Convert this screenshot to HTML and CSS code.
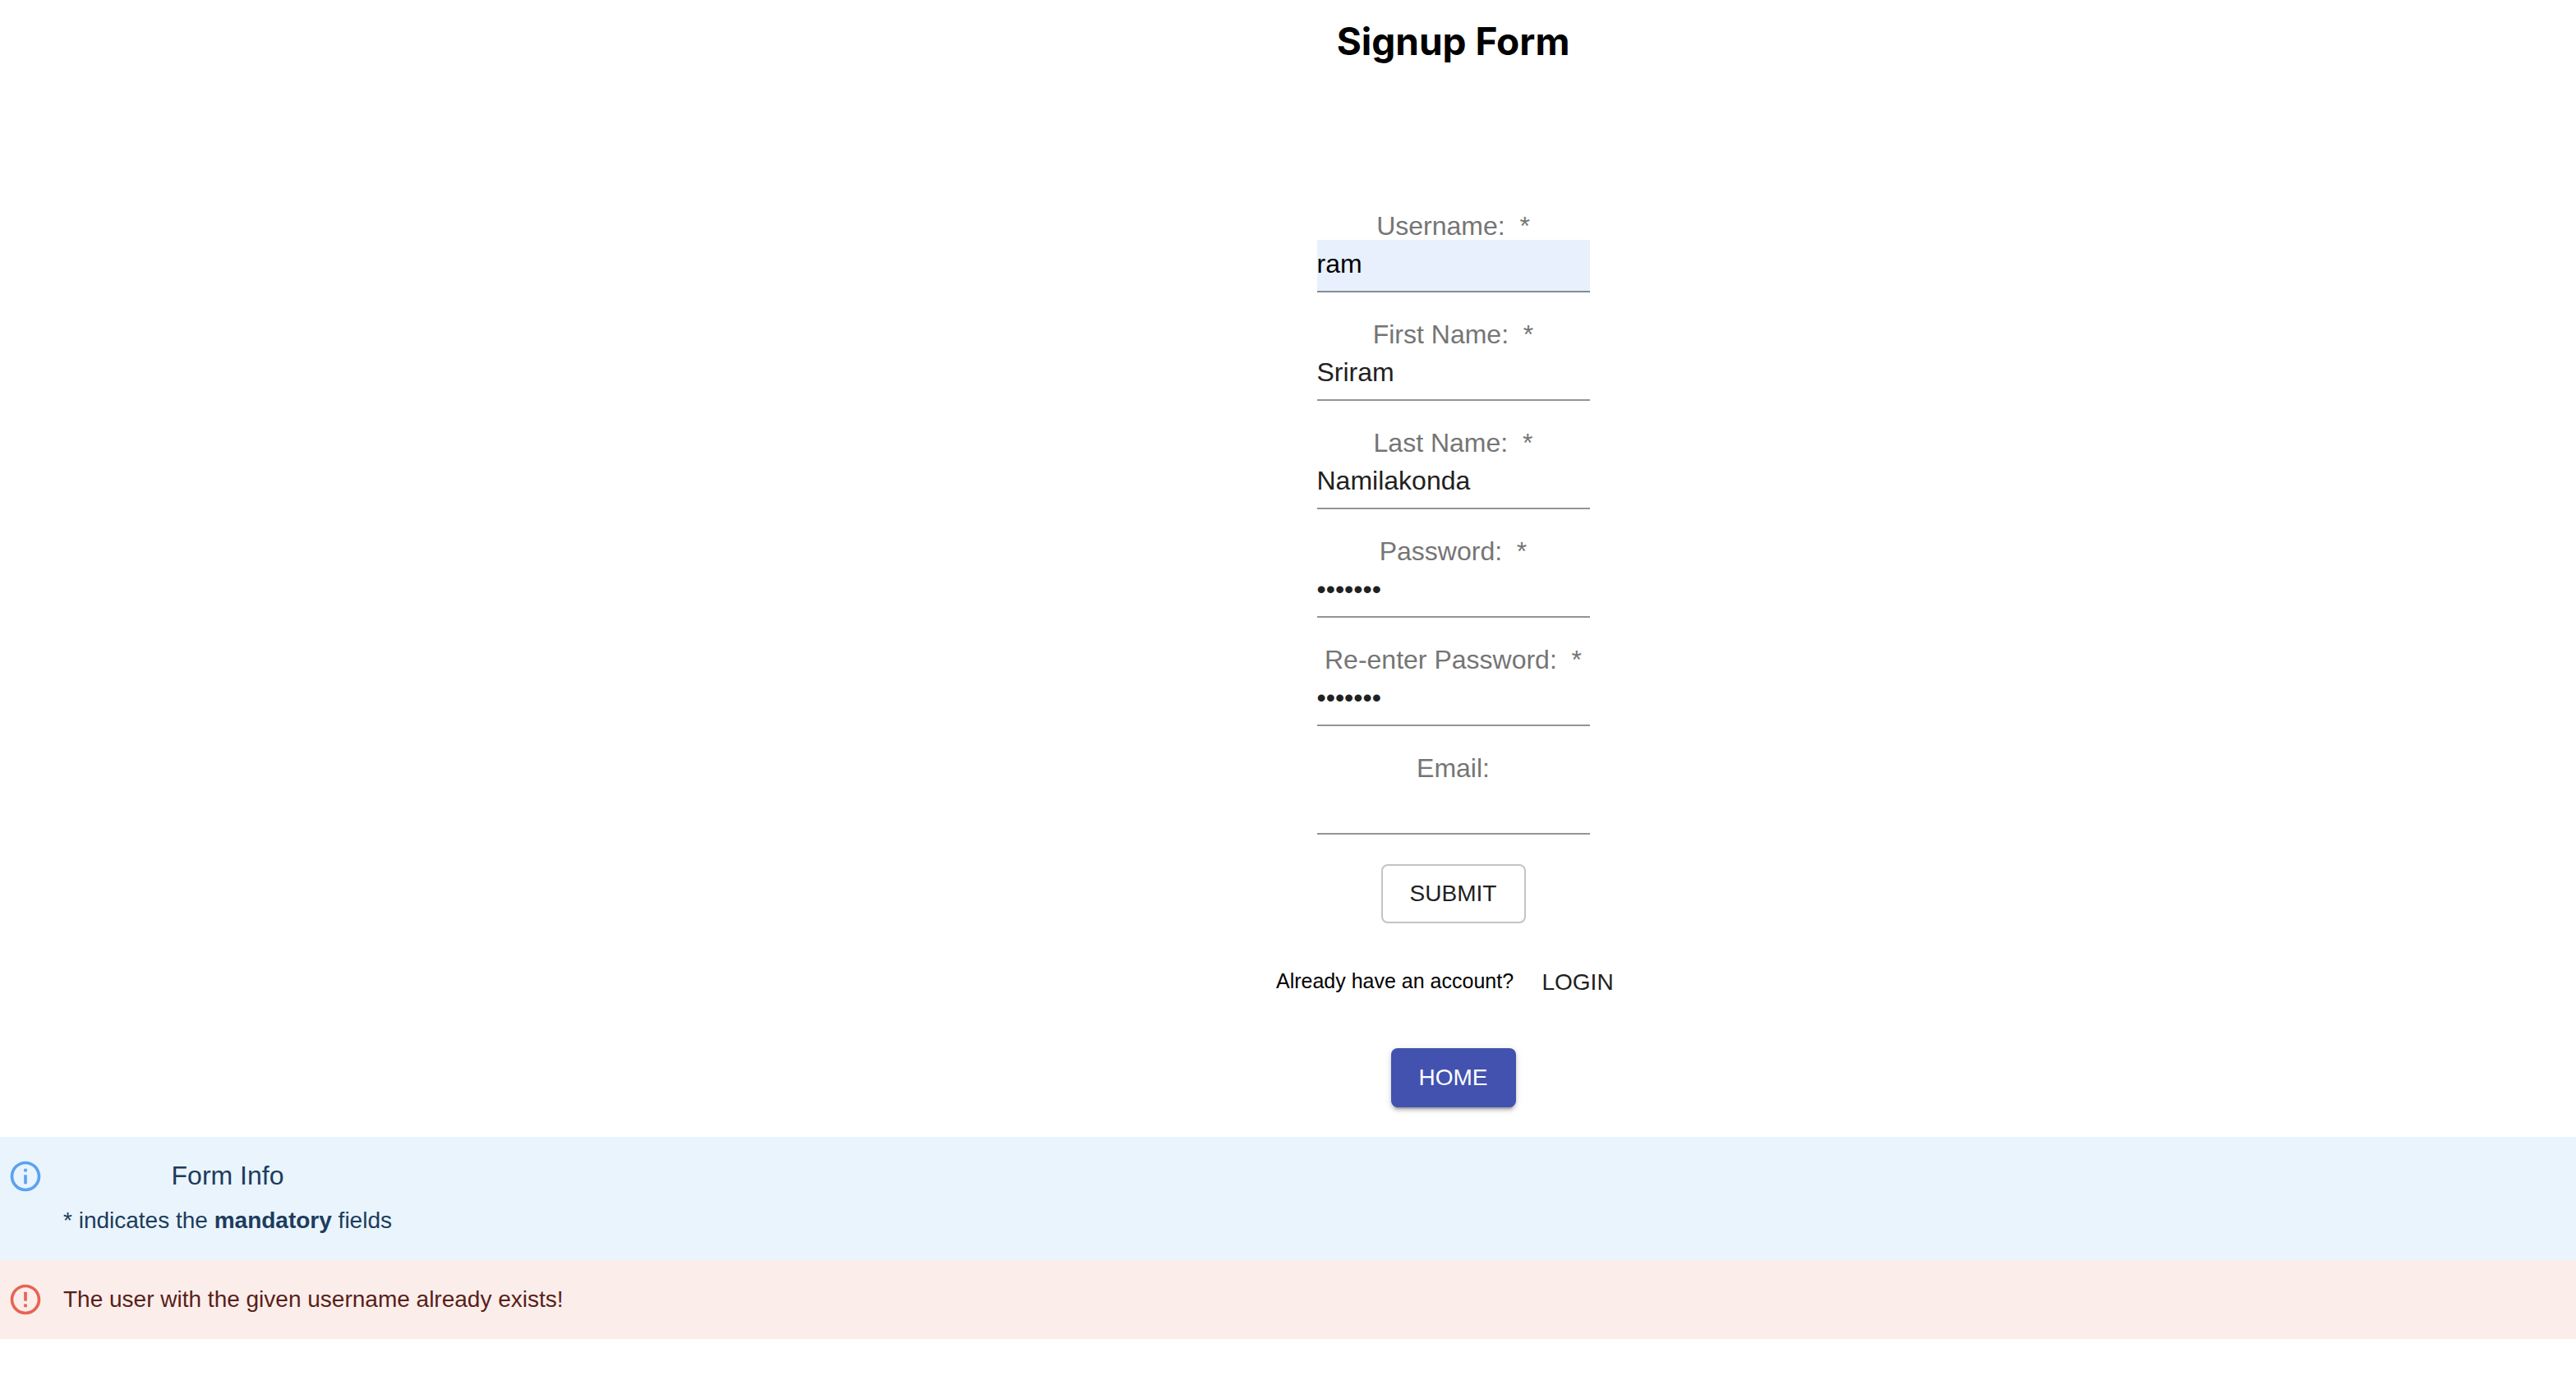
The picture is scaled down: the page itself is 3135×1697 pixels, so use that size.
FILE: index.html
```html
<!DOCTYPE html>
<html lang="en">
<head>
<meta charset="utf-8">
<meta name="viewport" content="width=device-width, initial-scale=1">
<title>Signup Form</title>
<link rel="stylesheet" href="styles.css">
</head>
<body>
<main class="signup">
  <h1 class="title">Signup Form</h1>
  <form class="form">
    <div class="field">
      <label class="label" for="username">Username: &nbsp;*</label>
      <input class="input input-autofilled" id="username" type="text" value="ram">
    </div>
    <div class="field">
      <label class="label" for="first-name">First Name: &nbsp;*</label>
      <input class="input" id="first-name" type="text" value="Sriram">
    </div>
    <div class="field">
      <label class="label" for="last-name">Last Name: &nbsp;*</label>
      <input class="input" id="last-name" type="text" value="Namilakonda">
    </div>
    <div class="field">
      <label class="label" for="password">Password: &nbsp;*</label>
      <input class="input" id="password" type="password" value="sriram1">
    </div>
    <div class="field">
      <label class="label" for="password-again">Re-enter Password: &nbsp;*</label>
      <input class="input" id="password-again" type="password" value="sriram1">
    </div>
    <div class="field">
      <label class="label" for="email">Email:</label>
      <input class="input" id="email" type="email">
    </div>
    <button class="button button-outlined" type="submit">SUBMIT</button>
  </form>
  <div class="login">
    <span class="caption">Already have an account?</span>
    <button class="button button-text" type="button">LOGIN</button>
  </div>
  <button class="button button-primary" type="button">HOME</button>
</main>
<section class="alert alert-info">
  <svg class="alert-icon" viewBox="0 0 24 24" aria-hidden="true"><path d="M11 7h2v2h-2zm0 4h2v6h-2zm1-9C6.48 2 2 6.48 2 12s4.48 10 10 10 10-4.48 10-10S17.52 2 12 2zm0 18c-4.41 0-8-3.59-8-8s3.59-8 8-8 8 3.59 8 8-3.59 8-8 8z"/></svg>
  <div class="alert-message">
    <h2 class="alert-title">Form Info</h2>
    <p class="alert-text">* indicates the <strong>mandatory</strong> fields</p>
  </div>
</section>
<section class="alert alert-error" role="alert">
  <svg class="alert-icon" viewBox="0 0 24 24" aria-hidden="true"><path d="M11 15h2v2h-2zm0-8h2v6h-2zm1-5C6.47 2 2 6.5 2 12s4.47 10 10 10 10-4.48 10-10S17.52 2 12 2zm0 18c-4.42 0-8-3.58-8-8s3.58-8 8-8 8 3.58 8 8-3.58 8-8 8z"/></svg>
  <div class="alert-message">
    <p class="alert-text">The user with the given username already exists!</p>
  </div>
</section>
</body>
</html>
```
FILE: styles.css
```css
* {
  box-sizing: border-box;
}

body {
  margin: 0;
  background: #fff;
  color: #000;
  font-family: "Liberation Sans", Arial, sans-serif;
  font-size: 32px;
}

.signup {
  display: flex;
  flex-direction: column;
  align-items: center;
  padding: 20px 0 36px 402px;
}

.title {
  margin: 0 0 180px;
  font-family: Inter, sans-serif;
  font-size: 46px;
  font-weight: 700;
  line-height: 60px;
}

.form {
  display: flex;
  flex-direction: column;
  align-items: center;
  gap: 36px;
}

.field {
  display: flex;
  flex-direction: column;
  width: 332px;
}

.label {
  padding-bottom: 2px;
  color: #757575;
  line-height: 30px;
  text-align: center;
  white-space: nowrap;
}

.input {
  width: 100%;
  height: 64px;
  padding: 10px 0 14px;
  border: 0;
  border-bottom: 2px solid #949494;
  border-radius: 0;
  outline: 0;
  background: transparent;
  color: #212121;
  font: inherit;
}

.input-autofilled {
  border-bottom-color: #868b94;
  background: #e8f0fe;
  color: #000;
}

.button {
  min-width: 128px;
  height: 72px;
  padding: 0 32px;
  border: 0;
  border-radius: 8px;
  background: transparent;
  color: #212121;
  font-family: inherit;
  font-size: 28px;
  line-height: 48px;
  cursor: pointer;
}

.button-outlined {
  min-width: 176px;
  border: 2px solid #c4c4c4;
}

.button-text {
  padding: 0 16px;
}

.button-primary {
  min-width: 152px;
  background: #4352af;
  color: #fff;
  box-shadow: 0 6px 2px -4px rgba(0, 0, 0, 0.2), 0 4px 4px rgba(0, 0, 0, 0.14), 0 2px 10px rgba(0, 0, 0, 0.12);
}

.login {
  display: flex;
  align-items: center;
  gap: 14px;
  margin: 36px 0 44px;
}

.caption {
  padding-bottom: 4px;
  font-size: 25px;
  line-height: 40px;
}

.alert {
  display: flex;
  align-items: flex-start;
  gap: 24px;
  padding: 12px 9px;
}

.alert-info {
  background: #e9f4fd;
  color: #1d3c5c;
}

.alert-error {
  background: #fbedea;
  color: #591f1a;
}

.alert-icon {
  flex: none;
  width: 44px;
  height: 44px;
  margin-top: 14px;
}

.alert-info .alert-icon {
  fill: #5aa2f1;
}

.alert-error .alert-icon {
  fill: #e76353;
}

.alert-message {
  padding: 16px 0;
}

.alert-title {
  margin: -4px 0 12px;
  font-size: 32px;
  font-weight: 400;
  line-height: 46px;
  text-align: center;
}

.alert-text {
  margin: 0;
  font-size: 28px;
  line-height: 40px;
}
```
